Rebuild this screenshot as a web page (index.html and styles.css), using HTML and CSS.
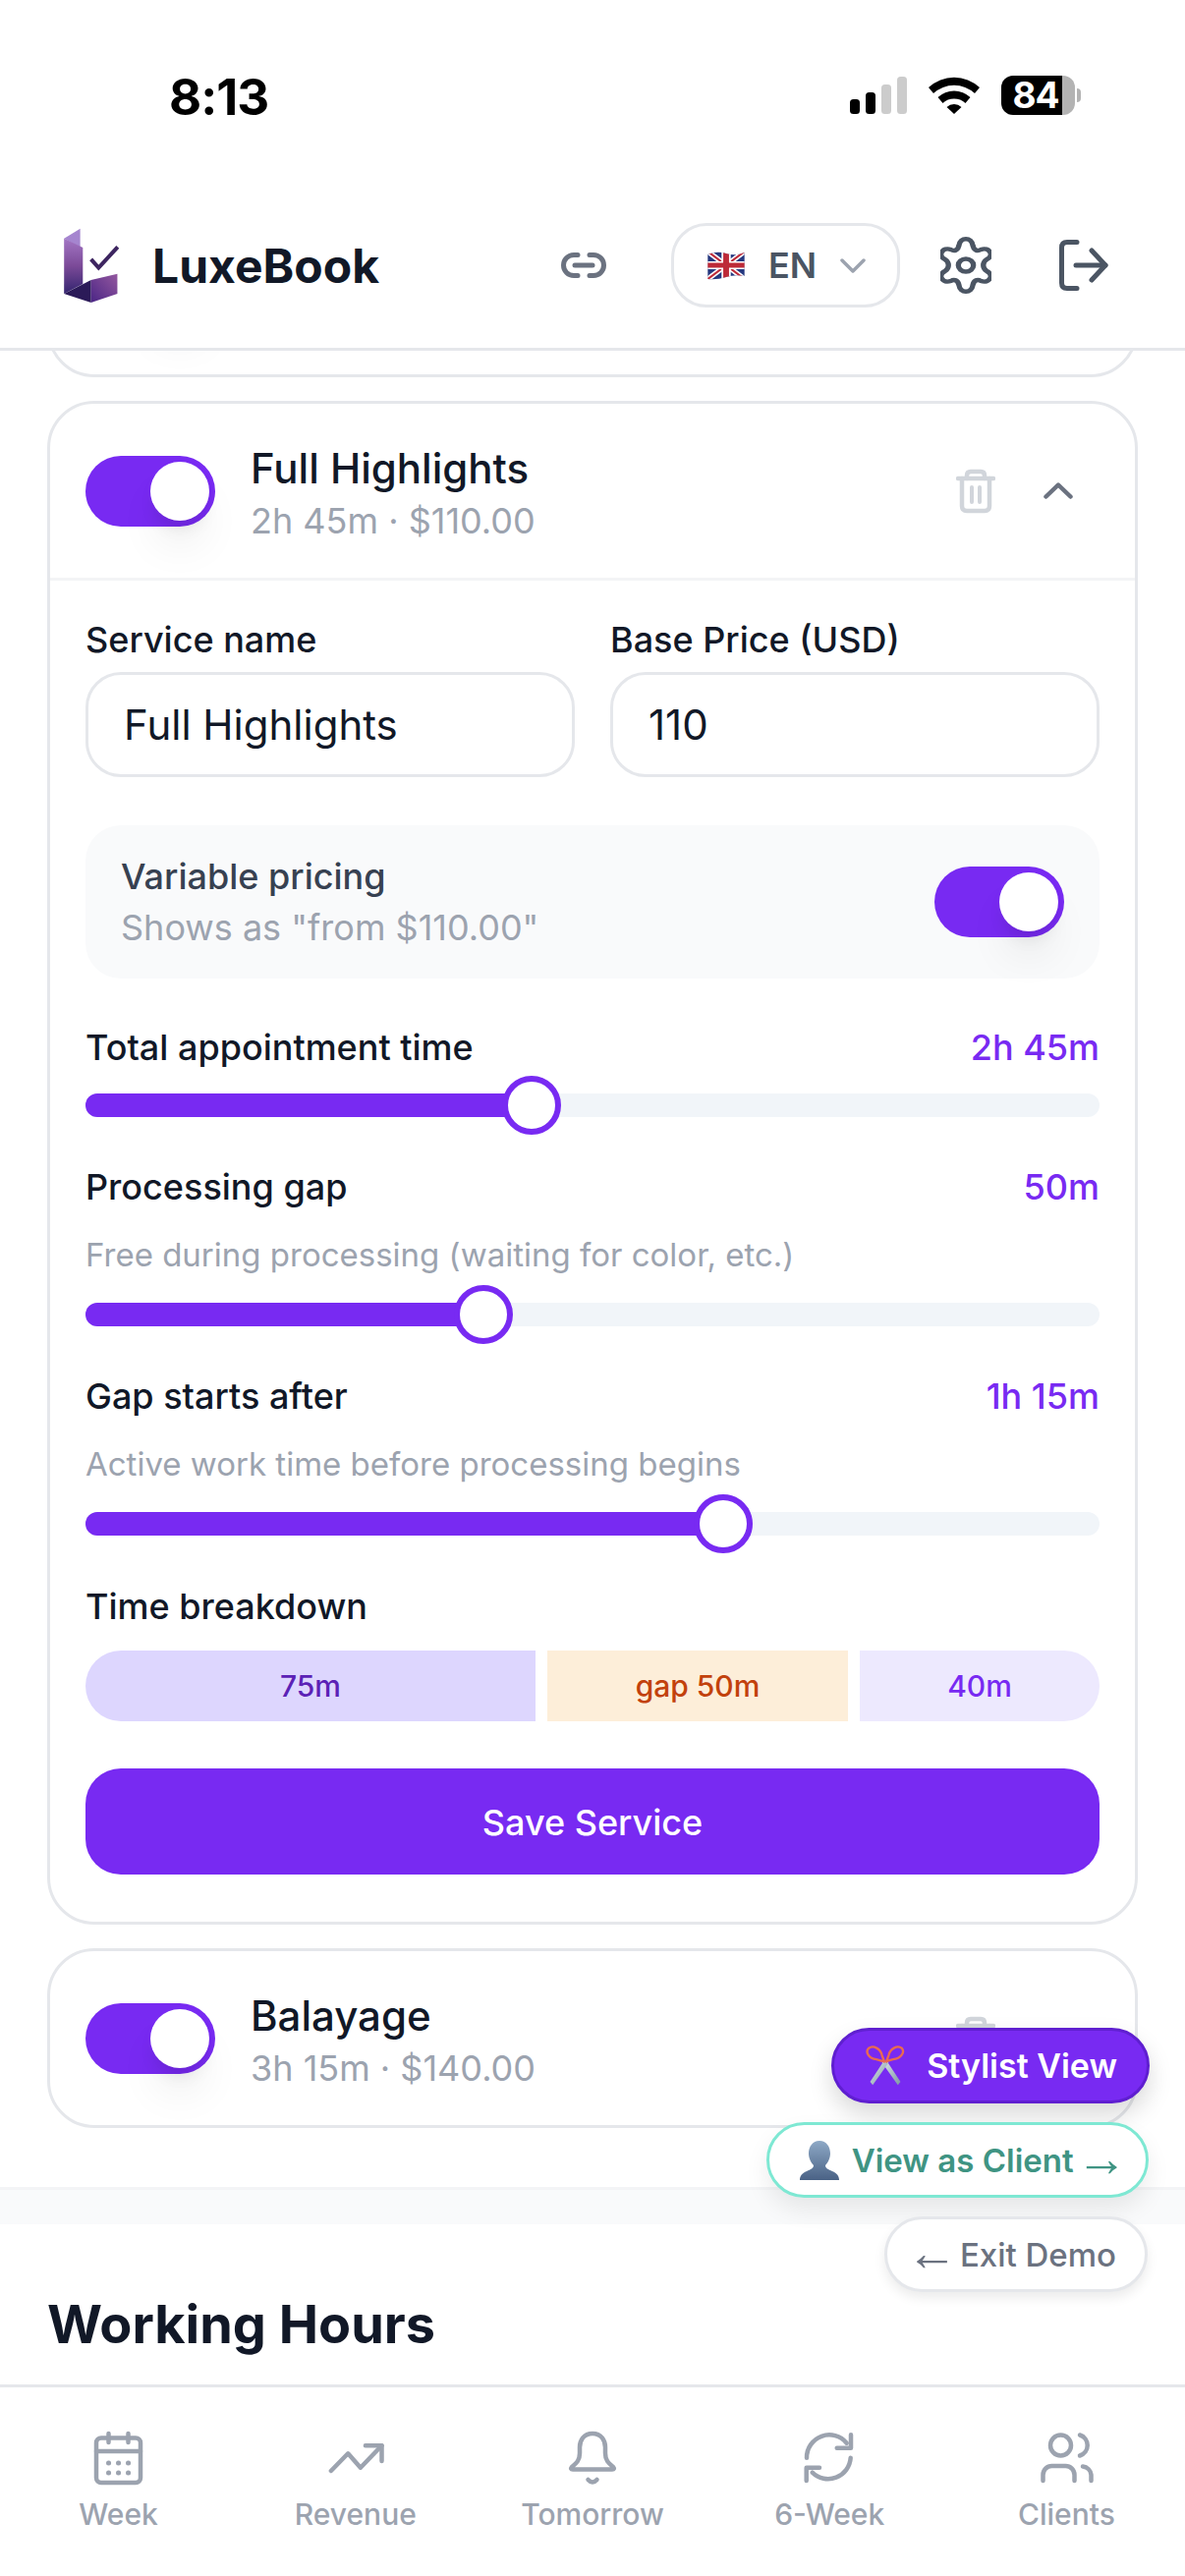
FILE: index.html
```html
<!DOCTYPE html>
<html lang="en">
<head>
    <meta charset="UTF-8">
    <meta name="viewport" content="width=device-width, initial-scale=1.0">
    <title>LuxeBook - Services</title>
    <link rel="stylesheet" href="styles.css">
</head>
<body>
    <div class="phone">
        <!-- Status bar -->
        <div class="status-bar">
            <span class="clock">8:13</span>
            <div class="status-icons">
                <svg class="signal" width="58" height="38" viewBox="0 0 58 38">
                    <rect x="0" y="23" width="10" height="15" rx="3.5" fill="#000"/>
                    <rect x="16" y="16" width="10" height="22" rx="3.5" fill="#000"/>
                    <rect x="32" y="8" width="10" height="30" rx="3.5" fill="#ccc"/>
                    <rect x="48" y="0" width="10" height="38" rx="3.5" fill="#ccc"/>
                </svg>
                <svg class="wifi" width="52" height="38" viewBox="0 0 52 38">
                    <path d="M0 11 A38 38 0 0 1 52 11 L47 17 A31 31 0 0 0 5 17 Z" fill="#000"/>
                    <path d="M9.500 21 A24 24 0 0 1 42.500 21 L37.500 27 A17 17 0 0 0 14.500 27 Z" fill="#000"/>
                    <path d="M18.500 31 A11 11 0 0 1 33.500 31 L26 38 Z" fill="#000"/>
                </svg>
                <div class="battery">
                    <div class="battery-level">84</div>
                    <div class="battery-rest"></div>
                    <div class="battery-nub"></div>
                </div>
            </div>
        </div>

        <!-- App header -->
        <header class="app-header">
            <svg class="logo" width="58" height="77" viewBox="100 95 172 230">
                <defs>
                    <linearGradient id="logoStem" x1="0" y1="0" x2="0" y2="1">
                        <stop offset="0" stop-color="#a376c4"/>
                        <stop offset="0.5" stop-color="#7b4a98"/>
                        <stop offset="1" stop-color="#33246f"/>
                    </linearGradient>
                    <linearGradient id="logoFoot" x1="0" y1="1" x2="1" y2="0">
                        <stop offset="0" stop-color="#4a2585"/>
                        <stop offset="1" stop-color="#94589f"/>
                    </linearGradient>
                </defs>
                <polygon points="103,127 152,97 152,155" fill="#a585cf"/>
                <polygon points="103,127 160,155 160,265 103,295" fill="url(#logoStem)"/>
                <polygon points="103,295 185,253 185,322" fill="#2b1a58"/>
                <polygon points="185,253 265,235 265,295 185,322" fill="url(#logoFoot)"/>
                <polyline points="185,190 208,216 266,153" fill="none" stroke="#3d2560" stroke-width="12"/>
            </svg>
            <span class="brand">LuxeBook</span>
            <svg class="icon-link" width="46" height="26" viewBox="0 0 46 26" fill="none" stroke="#6b7280" stroke-width="5" stroke-linecap="round">
                <path d="M17 2.500 H13 A10.500 10.500 0 0 0 13 23.500 H17"/>
                <path d="M29 2.500 H33 A10.500 10.500 0 0 1 33 23.500 H29"/>
                <path d="M14 13 H32"/>
            </svg>
            <div class="lang-select">
                <svg class="flag" width="40" height="30" viewBox="0 0 34 30" preserveAspectRatio="none">
                    <defs>
                        <clipPath id="flagWave">
                            <path d="M1 4 Q9 0 17 3 T33 2 V26 Q25 24 17 27 T1 29 Z"/>
                        </clipPath>
                    </defs>
                    <g clip-path="url(#flagWave)">
                        <rect width="34" height="30" fill="#25387f"/>
                        <path d="M0 0 L34 30 M34 0 L0 30" stroke="#fff" stroke-width="5"/>
                        <path d="M0 0 L34 30 M34 0 L0 30" stroke="#bd2a38" stroke-width="2"/>
                        <path d="M17 0 V30 M0 15 H34" stroke="#fff" stroke-width="8"/>
                        <path d="M17 0 V30 M0 15 H34" stroke="#bd2a38" stroke-width="5"/>
                    </g>
                </svg>
                <span class="lang-code">EN</span>
                <svg width="26" height="15" viewBox="0 0 26 15" fill="none" stroke="#9ca3af" stroke-width="3.500" stroke-linecap="round" stroke-linejoin="round">
                    <path d="M2 2 L13 13 L24 2"/>
                </svg>
            </div>
            <svg class="icon-gear" width="52" height="58" viewBox="-22 -29 44 58" preserveAspectRatio="none" fill="none" stroke="#4b5563" stroke-width="4.500" stroke-linejoin="round">
                <path d="M-6 -20 C-5 -29 5 -29 6 -20 C7 -15 10 -14 13 -16 C20 -19 25 -10 18 -6 C14 -3 14 3 18 6 C25 10 20 19 13 16 C10 14 7 15 6 20 C5 29 -5 29 -6 20 C-7 15 -10 14 -13 16 C-20 19 -25 10 -18 6 C-14 3 -14 -3 -18 -6 C-25 -10 -20 -19 -13 -16 C-10 -14 -7 -15 -6 -20 Z"/>
                <circle cx="0" cy="0" r="6.500"/>
            </svg>
            <svg class="icon-logout" width="50" height="52" viewBox="0 0 50 52" fill="none" stroke="#4b5563" stroke-width="5" stroke-linecap="round" stroke-linejoin="round">
                <path d="M18 2.500 H8 Q2.500 2.500 2.500 8 V44 Q2.500 49.500 8 49.500 H18"/>
                <path d="M17 26 H47"/>
                <path d="M33 11 L47 26 L33 41"/>
            </svg>
        </header>

        <!-- Scrolling list of services -->
        <main class="scroll-area">
            <section class="service-card service-card-prev">
                <div class="service-head">
                    <div class="toggle"><span class="toggle-thumb"></span></div>
                </div>
            </section>

            <section class="service-card">
                <div class="service-head service-head-open">
                    <div class="toggle"><span class="toggle-thumb"></span></div>
                    <div class="service-summary">
                        <div class="service-title">Full Highlights</div>
                        <div class="service-meta">2h 45m · $110.00</div>
                    </div>
                    <div class="service-actions">
                        <svg width="40" height="46" viewBox="0 0 40 46" fill="none" stroke="#d1d5db" stroke-width="4.500" stroke-linecap="round" stroke-linejoin="round">
                            <path d="M2 10 H38"/>
                            <path d="M11 10 V7 Q11 3 15 3 H25 Q29 3 29 7 V10"/>
                            <path d="M6 10 V38 Q6 43 11 43 H29 Q34 43 34 38 V10"/>
                            <path d="M16 19 V34 M24 19 V34" stroke-width="4"/>
                        </svg>
                        <svg width="30" height="17" viewBox="0 0 30 17" fill="none" stroke="#6b7280" stroke-width="4.500" stroke-linecap="round" stroke-linejoin="round">
                            <path d="M2.500 14.500 L15 2.500 L27.500 14.500"/>
                        </svg>
                    </div>
                </div>

                <div class="service-body">
                    <div class="field-row">
                        <div class="field">
                            <label class="field-label">Service name</label>
                            <div class="text-input">Full Highlights</div>
                        </div>
                        <div class="field">
                            <label class="field-label">Base Price (USD)</label>
                            <div class="text-input">110</div>
                        </div>
                    </div>

                    <div class="pricing-box">
                        <div>
                            <div class="pricing-title">Variable pricing</div>
                            <div class="pricing-note">Shows as "from $110.00"</div>
                        </div>
                        <div class="toggle"><span class="toggle-thumb"></span></div>
                    </div>

                    <div class="slider-group">
                        <div class="slider-head">
                            <span class="field-label">Total appointment time</span>
                            <span class="slider-value">2h 45m</span>
                        </div>
                        <div class="slider"><div class="slider-fill" style="width: 454px"></div></div>
                    </div>

                    <div class="slider-group">
                        <div class="slider-head">
                            <span class="field-label">Processing gap</span>
                            <span class="slider-value">50m</span>
                        </div>
                        <div class="slider-note">Free during processing (waiting for color, etc.)</div>
                        <div class="slider"><div class="slider-fill" style="width: 405px"></div></div>
                    </div>

                    <div class="slider-group">
                        <div class="slider-head">
                            <span class="field-label">Gap starts after</span>
                            <span class="slider-value">1h 15m</span>
                        </div>
                        <div class="slider-note">Active work time before processing begins</div>
                        <div class="slider"><div class="slider-fill" style="width: 649px"></div></div>
                    </div>

                    <div class="breakdown">
                        <div class="field-label">Time breakdown</div>
                        <div class="breakdown-bar">
                            <div class="segment segment-active" style="flex-grow: 458">75m</div>
                            <div class="segment segment-gap" style="flex-grow: 306">gap 50m</div>
                            <div class="segment segment-rest" style="flex-grow: 244">40m</div>
                        </div>
                    </div>

                    <button class="save-button">Save Service</button>
                </div>
            </section>

            <section class="service-card">
                <div class="service-head">
                    <div class="toggle"><span class="toggle-thumb"></span></div>
                    <div class="service-summary">
                        <div class="service-title">Balayage</div>
                        <div class="service-meta">3h 15m · $140.00</div>
                    </div>
                    <div class="service-actions">
                        <svg width="40" height="46" viewBox="0 0 40 46" fill="none" stroke="#d1d5db" stroke-width="4.500" stroke-linecap="round" stroke-linejoin="round">
                            <path d="M2 10 H38"/>
                            <path d="M11 10 V7 Q11 3 15 3 H25 Q29 3 29 7 V10"/>
                            <path d="M6 10 V38 Q6 43 11 43 H29 Q34 43 34 38 V10"/>
                            <path d="M16 19 V34 M24 19 V34" stroke-width="4"/>
                        </svg>
                        <svg width="30" height="17" viewBox="0 0 30 17" fill="none" stroke="#6b7280" stroke-width="4.500" stroke-linecap="round" stroke-linejoin="round">
                            <path d="M2.500 2.500 L15 14.500 L27.500 2.500"/>
                        </svg>
                    </div>
                </div>
            </section>

            <div class="section-band"></div>
            <h2 class="section-title">Working Hours</h2>
        </main>

        <!-- Bottom tab bar -->
        <nav class="tab-bar">
            <div class="tab">
                <svg width="58" height="58" viewBox="0 0 58 58" fill="none" stroke="#9ca3af" stroke-width="4.500" stroke-linecap="round" stroke-linejoin="round">
                    <rect x="6" y="8.500" width="45" height="45.500" rx="5"/>
                    <path d="M6 22 H51"/>
                    <path d="M18.500 4 V13 M38.500 4 V13"/>
                    <path d="M18.500 34 H18.600 M28.500 34 H28.600 M38.500 34 H38.600 M18.500 44 H18.600 M28.500 44 H28.600 M38.500 44 H38.600" stroke-width="5"/>
                </svg>
                <span>Week</span>
            </div>
            <div class="tab">
                <svg width="58" height="58" viewBox="0 0 58 58" fill="none" stroke="#9ca3af" stroke-width="4.500" stroke-linecap="round" stroke-linejoin="round">
                    <path d="M3.900 42 L21.200 24.300 L33.900 38.700 L55.500 16.300"/>
                    <path d="M38.900 16.300 H55.500 V32"/>
                </svg>
                <span>Revenue</span>
            </div>
            <div class="tab">
                <svg width="58" height="58" viewBox="0 0 58 58" fill="none" stroke="#9ca3af" stroke-width="4.500" stroke-linecap="round" stroke-linejoin="round">
                    <path d="M29 4 C20 4 16 11 16 18 V24 C16 31 13 34 8 38 Q6 40.500 9 40.500 H49 Q52 40.500 50 38 C45 34 42 31 42 24 V18 C42 11 38 4 29 4 Z"/>
                    <path d="M24.500 51 Q29 56 33.500 51"/>
                </svg>
                <span>Tomorrow</span>
            </div>
            <div class="tab">
                <svg width="58" height="58" viewBox="0 0 58 58" fill="none" stroke="#9ca3af" stroke-width="4.500" stroke-linecap="round" stroke-linejoin="round">
                    <path d="M6 28.700 A23 23 0 0 1 46.700 13.700"/>
                    <path d="M51 5.300 V18.700 H36.700"/>
                    <path d="M50.700 28.700 A23 23 0 0 1 11.700 43.700"/>
                    <path d="M5.700 52 V38.700 H19"/>
                </svg>
                <span>6-Week</span>
            </div>
            <div class="tab">
                <svg width="58" height="58" viewBox="0 0 58 58" fill="none" stroke="#9ca3af" stroke-width="4.500" stroke-linecap="round" stroke-linejoin="round">
                    <circle cx="23.500" cy="16" r="10.500"/>
                    <path d="M43 5.500 A11 11 0 0 1 43 26.500"/>
                    <path d="M5.500 52 V46 A9 9 0 0 1 14.500 37 H28.500 A9 9 0 0 1 37.500 46 V52"/>
                    <path d="M46 37.500 A9.500 9.500 0 0 1 54.500 46 V52"/>
                </svg>
                <span>Clients</span>
            </div>
        </nav>

        <!-- Demo switcher floats over the page -->
        <div class="demo-switcher">
            <button class="demo-btn demo-stylist">
                <svg width="40" height="41" viewBox="373 130 118 122">
                    <defs>
                        <linearGradient id="bladeGrad" x1="0" y1="0" x2="1" y2="1">
                            <stop offset="0" stop-color="#dfe6ea"/>
                            <stop offset="1" stop-color="#7d97a4"/>
                        </linearGradient>
                    </defs>
                    <polygon points="422,182 436,176 478,240 470,250" fill="url(#bladeGrad)"/>
                    <polygon points="442,182 428,176 386,240 394,250" fill="url(#bladeGrad)"/>
                    <path d="M425 178 L405 172 C382 170 370 150 382 138 C396 128 418 140 422 160 L430 182" fill="none" stroke="#ea6a50" stroke-width="7"/>
                    <path d="M435 178 L455 172 C480 170 492 150 482 138 C468 128 446 140 442 160 L434 182" fill="none" stroke="#ea6a50" stroke-width="7"/>
                </svg>
                <span>Stylist View</span>
            </button>
            <button class="demo-btn demo-client">
                <svg width="42" height="40" viewBox="0 0 42 40">
                    <defs>
                        <linearGradient id="bustGrad" x1="0" y1="0" x2="0" y2="1">
                            <stop offset="0" stop-color="#8ea9c6"/>
                            <stop offset="1" stop-color="#4a6285"/>
                        </linearGradient>
                    </defs>
                    <path d="M21 0 C28 0 32 6 32 13 C32 18 29 23 27 25 C27 28 30 29 34 31 C39 33 41 36 41 40 H1 C1 36 3 33 8 31 C12 29 15 28 15 25 C13 23 10 18 10 13 C10 6 14 0 21 0 Z" fill="url(#bustGrad)"/>
                </svg>
                <span>View as Client <span class="thin-arrow thin-arrow-next">→</span></span>
            </button>
            <button class="demo-btn demo-exit">
                <span><span class="thin-arrow thin-arrow-back">←</span> Exit Demo</span>
            </button>
        </div>
    </div>
</body>
</html>
```

FILE: styles.css
```css
* {
    box-sizing: border-box;
}
body {
    margin: 0;
    background-color: #fff;
    font-family: Inter, "Noto Sans", sans-serif;
    color: #111827;
}
.phone {
    position: relative;
    width: 1206px;
    height: 2622px;
    display: flex;
    flex-direction: column;
    overflow: hidden;
    background-color: #fff;
}

/* status bar */
.status-bar {
    height: 198px;
    flex-shrink: 0;
    display: flex;
    justify-content: space-between;
    align-items: flex-start;
    padding: 69px 106px 0 172px;
}
.clock {
    font-size: 51px;
    font-weight: 700;
    letter-spacing: -1px;
    line-height: 60px;
    color: #000;
}
.status-icons {
    display: flex;
    align-items: center;
    gap: 22px;
    margin-top: 8px;
}
.battery {
    position: relative;
    display: flex;
    align-items: center;
}
.battery-level {
    width: 62px;
    height: 40px;
    padding-left: 8px;
    background-color: #000;
    border-radius: 12px 0 0 12px;
    color: #fff;
    font-size: 37px;
    font-weight: 700;
    letter-spacing: -1px;
    line-height: 40px;
    text-align: center;
    white-space: nowrap;
}
.battery-rest {
    width: 13px;
    height: 40px;
    background-color: #b3b3b3;
    border-radius: 0 12px 12px 0;
}
.battery-nub {
    width: 4px;
    height: 14px;
    margin-left: 2px;
    background-color: #b3b3b3;
    border-radius: 0 4px 4px 0;
}

/* app header */
.app-header {
    height: 159px;
    flex-shrink: 0;
    display: flex;
    align-items: center;
    padding: 0 0 12px 64px;
    border-bottom: 3px solid #e5e7eb;
    background-color: #fff;
    position: relative;
    z-index: 2;
}
.brand {
    margin-left: 33px;
    font-size: 48px;
    font-weight: 700;
    color: #111827;
}
.icon-link {
    margin-left: 185px;
}
.lang-select {
    width: 233px;
    height: 86px;
    margin-left: 66px;
    display: flex;
    align-items: center;
    padding-left: 33px;
    border: 3px solid #e5e7eb;
    border-radius: 36px;
}
.lang-code {
    margin: 0 24px 0 23px;
    font-size: 36px;
    font-weight: 600;
    color: #4b5563;
}
.icon-gear {
    margin-left: 41px;
}
.icon-logout {
    margin-left: 69px;
}

/* service list */
.scroll-area {
    flex: 1;
    overflow: hidden;
    padding-top: 0;
}
.service-card {
    margin: 24px 48px 0;
    border: 3px solid #e5e7eb;
    border-radius: 48px;
    background-color: #fff;
    overflow: hidden;
}
.service-card-prev {
    margin-top: -156px;
}
.service-head {
    height: 177px;
    display: flex;
    align-items: center;
    padding: 0 63px 0 36px;
}
.service-head-open {
    height: 180px;
    border-bottom: 3px solid #f3f4f6;
}
.toggle {
    width: 132px;
    height: 72px;
    flex-shrink: 0;
    display: flex;
    justify-content: flex-end;
    align-items: center;
    padding-right: 6px;
    border-radius: 36px;
    background-color: #782af2;
}
.toggle-thumb {
    width: 60px;
    height: 60px;
    border-radius: 50%;
    background-color: #fff;
    box-shadow: 0 30px 45px -9px rgba(0,0,0,0.1), 0 12px 18px -6px rgba(0,0,0,0.1);
}
.service-summary {
    margin-left: 36px;
    padding-top: 8px;
}
.service-title {
    font-size: 42px;
    font-weight: 500;
    line-height: 48px;
    color: #111827;
}
.service-meta {
    margin-top: 5px;
    font-size: 36px;
    line-height: 48px;
    color: #9ca3af;
}
.service-actions {
    margin-left: auto;
    display: flex;
    align-items: center;
    gap: 49px;
}
.service-body {
    padding: 38px 36px 48px;
}
.field-row {
    display: grid;
    grid-template-columns: 1fr 1fr;
    gap: 36px;
}
.field-label {
    display: block;
    font-size: 36px;
    font-weight: 500;
    line-height: 45px;
    color: #111827;
}
.text-input {
    height: 107px;
    margin-top: 10px;
    padding-left: 36px;
    border: 3px solid #e5e7eb;
    border-radius: 36px;
    font-size: 42px;
    line-height: 101px;
    color: #111827;
}
.pricing-box {
    height: 156px;
    margin-top: 49px;
    margin-bottom: 48px;
    display: flex;
    justify-content: space-between;
    align-items: center;
    padding: 0 36px;
    border-radius: 36px;
    background-color: #f9fafb;
}
.pricing-title {
    font-size: 36px;
    font-weight: 500;
    line-height: 48px;
    color: #374151;
}
.pricing-note {
    margin-top: 4px;
    font-size: 36px;
    line-height: 48px;
    color: #9ca3af;
}

/* sliders */
.slider-group + .slider-group {
    margin-top: 49px;
}
.slider-head {
    display: flex;
    justify-content: space-between;
    margin-bottom: 24px;
}
.slider-group + .slider-group .slider-head {
    margin-bottom: 22px;
}
.slider-value {
    font-size: 36px;
    font-weight: 500;
    line-height: 45px;
    color: #782af2;
}
.slider-note {
    margin-bottom: 24px;
    font-size: 33px;
    line-height: 49px;
    color: #9ca3af;
}
.slider {
    height: 24px;
    border-radius: 12px;
    background-color: #f1f5f9;
}
.slider-fill {
    position: relative;
    height: 24px;
    border-radius: 12px;
    background-color: #782af2;
}
.slider-fill::after {
    content: "";
    box-sizing: border-box;
    position: absolute;
    right: -30px;
    top: -18px;
    width: 60px;
    height: 60px;
    border: 6px solid #782af2;
    border-radius: 50%;
    background-color: #fff;
}

/* time breakdown */
.breakdown {
    margin-top: 50px;
}
.breakdown-bar {
    height: 72px;
    margin-top: 22px;
    display: flex;
    gap: 12px;
    border-radius: 36px;
    overflow: hidden;
}
.segment {
    flex-basis: 0;
    display: flex;
    justify-content: center;
    align-items: center;
    font-size: 30px;
    font-weight: 500;
}
.segment-active {
    background-color: #ddd6fe;
    color: #5b21b6;
}
.segment-gap {
    background-color: #fdeed9;
    color: #c2410c;
}
.segment-rest {
    background-color: #ede9fe;
    color: #782af2;
}
.save-button {
    display: block;
    width: 100%;
    height: 108px;
    margin-top: 48px;
    padding-top: 3px;
    border: none;
    border-radius: 36px;
    background-color: #782af2;
    color: #fff;
    font-family: inherit;
    font-size: 36px;
    font-weight: 500;
}

/* lower section */
.section-band {
    height: 38px;
    margin-top: 60px;
    border-top: 3px solid #f3f4f6;
    background-color: #f9fafb;
}
.section-title {
    margin: 69px 48px 0;
    font-size: 54px;
    font-weight: 700;
    line-height: 66px;
    color: #111827;
}

/* tab bar */
.tab-bar {
    height: 195px;
    flex-shrink: 0;
    display: grid;
    grid-template-columns: repeat(5, 1fr);
    padding-top: 43px;
    border-top: 3px solid #e5e7eb;
    background-color: #fff;
    position: relative;
    z-index: 2;
}
.tab {
    display: flex;
    flex-direction: column;
    align-items: center;
    gap: 8px;
    font-size: 30px;
    font-weight: 500;
    line-height: 40px;
    color: #9ca3af;
}

/* floating demo buttons */
.demo-switcher {
    position: absolute;
    right: 36px;
    top: 2064px;
    z-index: 3;
    display: flex;
    flex-direction: column;
    align-items: flex-end;
    gap: 19px;
}
.demo-btn {
    display: flex;
    align-items: center;
    height: 77px;
    border-radius: 39px;
    font-family: inherit;
    font-size: 33px;
    font-weight: 600;
    white-space: nowrap;
}
.demo-stylist {
    gap: 22px;
    padding: 0 30px 0 32px;
    border: 3px solid #5f1fd0;
    background-color: #782af2;
    color: #fff;
    font-size: 34px;
    box-shadow: 0 12px 24px rgba(0,0,0,0.15);
}
.demo-client {
    gap: 12px;
    margin-right: 1px;
    padding: 0 19px 0 30px;
    border: 3px solid #7ee8d3;
    background-color: #fff;
    color: #3f9483;
    box-shadow: 0 12px 24px rgba(0,0,0,0.08);
}
.demo-exit {
    margin-right: 2px;
    padding: 0 29px 0 19px;
    border: 3px solid #e5e7eb;
    background-color: #fff;
    color: #6b7280;
    font-weight: 500;
    box-shadow: 0 6px 12px rgba(0,0,0,0.08);
}
.thin-arrow {
    font-family: "Liberation Sans", sans-serif;
    font-size: 52px;
    font-weight: 400;
    line-height: 0;
    vertical-align: -4px;
}
.thin-arrow-next {
    margin-left: -6px;
}
.thin-arrow-back {
    margin-right: -6px;
}
```
